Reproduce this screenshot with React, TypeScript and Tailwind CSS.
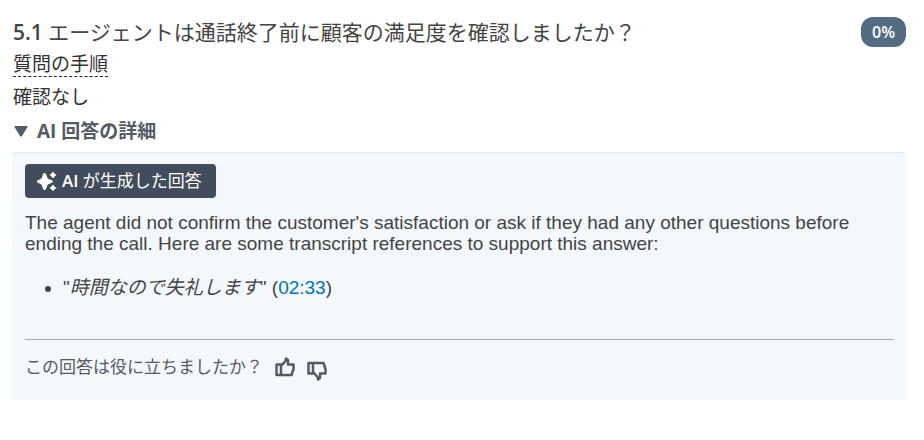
const sans = 'font-["Open_Sans","Noto_Sans_CJK_JP",sans-serif]';
const body = 'font-["Liberation_Sans","Noto_Sans_CJK_JP",sans-serif]';

function SparkleIcon() {
  return (
    <svg className="h-5 w-5 shrink-0" viewBox="0 0 20 20" fill="currentColor" aria-hidden="true">
      <path d="M7.500 2C8.800 2 9.300 3.500 10 5.800C10.500 7.500 11 8 12.800 8.500C15 9.200 15.800 9.500 15.800 10.500C15.800 11.500 15 11.800 12.800 12.500C11 13 10.500 13.500 10 15.200C9.300 17.500 8.800 19 7.500 19C6.200 19 5.800 17.500 5.200 15.200C4.700 13.500 4.200 13 2.500 12.500C0.500 11.800 0 11.500 0 10.500C0 9.500 0.500 9.200 2.500 8.500C4.200 8 4.700 7.500 5.200 5.800C5.800 3.500 6.200 2 7.500 2Z" />
      <path d="M16 0.500L17.500 2.500L19.500 4L17.500 5.500L16 7.500L14.500 5.500L12.500 4L14.500 2.500Z" />
      <path d="M16 13.500L17.500 15.500L19.500 17L17.500 18.500L16 20L14.500 18.500L12.500 17L14.500 15.500Z" />
    </svg>
  );
}

function ThumbIcon({ down = false }: { down?: boolean }) {
  return (
    <svg
      className={down ? 'h-5 w-5 -scale-y-100' : 'h-5 w-5'}
      viewBox="0 0 20 20"
      fill="none"
      stroke="currentColor"
      strokeWidth={2.5}
      strokeLinejoin="round"
      aria-hidden="true"
    >
      <path d="M1.500 7.500H6V18H1.500Z" />
      <path d="M6 9L10.500 4L11 1.500L13 3V7.500H18.500L18.500 12L16.500 18H6" />
    </svg>
  );
}

export default function App() {
  return (
    <main className={`${sans} bg-white px-3 pt-4 text-[#333]`}>
      <header className="flex items-start justify-between pr-[6px] pl-px">
        <h1 className="text-[21px] leading-8 text-[#444]">
          <span className="font-semibold">5.1</span> エージェントは通話終了前に顧客の満足度を確認しましたか？
        </h1>
        <span className="mt-px rounded-xl bg-[#546b84] px-[11px] text-base leading-[30px] font-semibold text-white">
          0%
        </span>
      </header>

      <div className="flex flex-col items-start px-px text-[19px]">
        <button type="button" className="mt-1 border-b border-dashed border-[#222] leading-6">
          質問の手順
        </button>
        <p className="mt-1 leading-8">確認なし</p>
      </div>

      <details open>
        <summary className="flex h-9 list-none items-center gap-2 px-px text-[19px] font-bold text-[#545b64]">
          <svg className="h-4 w-4" viewBox="0 0 16 16" fill="currentColor" aria-hidden="true">
            <path d="M2 3H14Q15 3 14.500 4L9 13Q8 14 7 13L1.500 4Q1 3 2 3Z" />
          </svg>
          AI 回答の詳細
        </summary>

        <section className="mt-[3px] mr-[5px] rounded-t-sm border-t border-[#e3e8e8] bg-[#f2f8fb] px-[13px] pt-[11px] pb-[17px]">
          <div className="flex h-[34px] w-fit items-center gap-[5px] rounded bg-[#414d5c] px-3 text-[17px] text-white">
            <SparkleIcon />
            <span className="pr-[2px]">
              <span className="font-semibold">AI</span> が生成した回答
            </span>
          </div>

          <div className={`${body} text-[19px] leading-[21px] text-[#444]`}>
            <p className="mt-[14px]">
              The agent did not confirm the customer's satisfaction or ask if they had any other questions before
              ending the call. Here are some transcript references to support this answer:
            </p>
            <ul className="mt-[23px] list-disc pl-[38px]">
              <li>
                "<em>時間なので失礼します</em>" (
                <a href="#transcript" className="text-[#0073bb]">02:33</a>)
              </li>
            </ul>
          </div>

          <footer className="mt-[41px] flex items-center gap-3 border-t border-[#aaa] pt-[11px] text-[17px] leading-8 text-[#545b64]">
            <span>この回答は役に立ちましたか？</span>
            <button type="button" aria-label="役に立った">
              <ThumbIcon />
            </button>
            <button type="button" aria-label="役に立たなかった" className="pt-2">
              <ThumbIcon down />
            </button>
          </footer>
        </section>
      </details>
    </main>
  );
}
